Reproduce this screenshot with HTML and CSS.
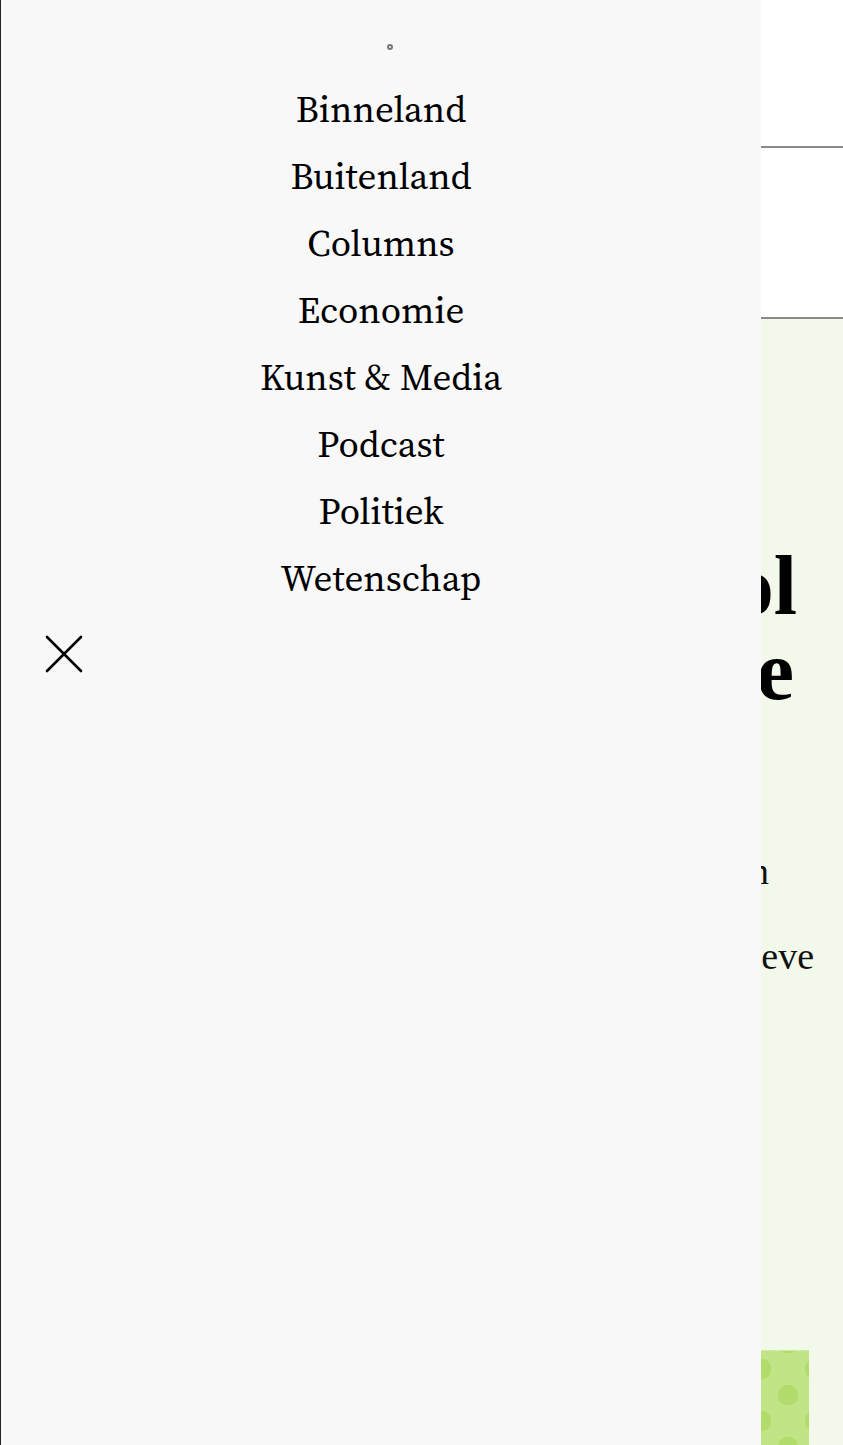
FILE: index.html
```html
<!DOCTYPE html>
<html lang="nl">
<head>
<meta charset="utf-8">
<link rel="stylesheet" href="styles.css">
</head>
<body>
<div class="page">
  <header class="site-header"></header>
  <nav class="site-nav"></nav>
  <main class="article">
    <h1 class="headline"><span>Idool</span><span>de</span></h1>
    <div class="intro">
      <p>in</p>
      <p>leeve</p>
    </div>
    <div class="illustration"></div>
  </main>
</div>

<aside class="menu-panel">
  <div class="menu-dot-row"><span class="menu-dot"></span></div>
  <ul class="menu-list">
    <li><a href="#">Binneland</a></li>
    <li><a href="#">Buitenland</a></li>
    <li><a href="#">Columns</a></li>
    <li><a href="#">Economie</a></li>
    <li><a href="#">Kunst &amp; Media</a></li>
    <li><a href="#">Podcast</a></li>
    <li><a href="#">Politiek</a></li>
    <li><a href="#">Wetenschap</a></li>
  </ul>
  <button class="menu-close" aria-label="Sluiten">
    <svg width="38" height="38" viewBox="0 0 38 38"><path d="M2 2 L36 36 M36 2 L2 36" stroke="#000" stroke-width="2.6" stroke-linecap="round" fill="none"/></svg>
  </button>
</aside>
</body>
</html>
```
FILE: styles.css
```css
html, body {
  margin: 0;
  padding: 0;
  background: #ffffff;
}
body {
  height: 1445px;
  overflow: hidden;
  position: relative;
}
.page {
  display: flex;
  flex-direction: column;
  height: 1445px;
}
.site-header {
  height: 146px;
  border-bottom: 2px solid #8a8a8a;
  background: #fff;
}
.site-nav {
  height: 169px;
  border-bottom: 2px solid #8a8a8a;
  background: #fff;
}
.article {
  flex: 1;
  background: #f3f9ea;
  display: flex;
  flex-direction: column;
}
.headline {
  margin: 224px 46px 0 0;
  font-family: "Liberation Serif", serif;
  font-weight: 700;
  font-size: 84px;
  line-height: 85px;
  color: #000;
  display: flex;
  flex-direction: column;
  align-items: flex-end;
}
.headline span:last-child {
  margin-right: 3px;
}
.intro {
  margin: 116px 29px 0 0;
  font-family: "Liberation Serif", serif;
  font-size: 38px;
  line-height: 85px;
  color: #111;
  text-align: right;
}
.intro p {
  margin: 0;
}
.intro p:first-child {
  margin-right: 45px;
}
.illustration {
  margin: auto 34px 0 0;
  height: 94px;
  background-color: #c1e586;
  background-image:
    radial-gradient(circle at 0 0, #b1db6a 0 10px, transparent 10.5px),
    radial-gradient(circle at 27px 26px, #b1db6a 0 10px, transparent 10.5px),
    radial-gradient(circle at 54px 0, #b1db6a 0 10px, transparent 10.5px),
    radial-gradient(circle at 0 52px, #b1db6a 0 10px, transparent 10.5px),
    radial-gradient(circle at 54px 52px, #b1db6a 0 10px, transparent 10.5px);
  background-size: 54px 52px;
  background-position: 761px 18px;
  border-top: 1px solid #cdeaa0;
}

.menu-panel {
  position: absolute;
  top: 0;
  left: 0;
  bottom: 0;
  width: 761px;
  background: #f8f8f8;
  border-left: 1px solid #222;
  padding-top: 44px;
  box-sizing: border-box;
  display: flex;
  flex-direction: column;
}
.menu-dot-row {
  display: flex;
  justify-content: center;
  padding-left: 18px;
  height: 6px;
}
.menu-dot {
  width: 6px;
  height: 6px;
  box-sizing: border-box;
  border: 2px solid #777;
  border-radius: 50%;
}
.menu-list {
  list-style: none;
  margin: 26px 0 0;
  padding: 0;
  text-align: center;
  font-family: "Source Serif 4", "Source Serif Pro", serif;
  font-size: 37px;
  line-height: 67px;
}
.menu-list a {
  color: #000;
  text-decoration: none;
}
.menu-close {
  align-self: flex-start;
  margin: 23px 0 0 44px;
  padding: 0;
  border: 0;
  background: none;
  width: 38px;
  height: 38px;
  display: flex;
}
```
